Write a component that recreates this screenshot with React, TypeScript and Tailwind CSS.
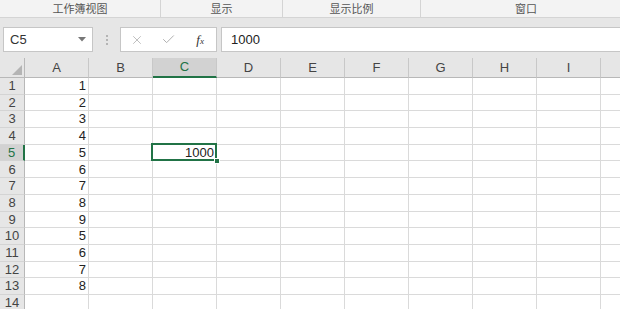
import { X, Check } from 'lucide-react';

const groups = [
  { label: '工作簿视图', w: 'w-[161px]' },
  { label: '显示', w: 'w-[122px]' },
  { label: '显示比例', w: 'w-[138px]' },
  { label: '窗口', w: 'w-[210px]' },
];

// J is only partly on screen, its letter falls off the edge
const cols = ['A', 'B', 'C', 'D', 'E', 'F', 'G', 'H', 'I', 'J'];
const colA = ['1', '2', '3', '4', '5', '6', '7', '8', '9', '5', '6', '7', '8', ''];

export default function App() {
  return (
    <div className="w-[620px] h-[309px] overflow-hidden bg-white font-['Liberation_Sans',sans-serif] text-[#222]">
      {/* ribbon group labels */}
      <div className="flex h-[18px] bg-[#f3f3f3] border-b border-[#d4d4d4]">
        {groups.map((g, i) => (
          <div
            key={g.label}
            className={`${g.w} shrink-0 flex justify-center items-start pt-[1px] ${i < groups.length - 1 ? 'border-r border-[#d4d4d4]' : ''}`}
          >
            <span className="text-[11px] leading-[14px] text-[#555] font-['Noto_Sans_CJK_SC',sans-serif]">{g.label}</span>
          </div>
        ))}
      </div>

      {/* formula bar */}
      <div className="flex items-start h-[40px] bg-[#e6e6e6] pt-[9px] pl-[3px]">
        <div className="w-[90px] h-[25px] bg-white border border-[#c6c6c6] flex items-center justify-between px-[6px]">
          <span className="text-[13px] text-[#333]">C5</span>
          <svg width="8" height="5" viewBox="0 0 8 5">
            <polygon points="0,0 8,0 4,4.5" fill="#777" />
          </svg>
        </div>
        <div className="w-[27px] h-[25px] flex flex-col items-center justify-center gap-[2px]">
          <span className="w-[2px] h-[2px] bg-[#b4b4b4]" />
          <span className="w-[2px] h-[2px] bg-[#b4b4b4]" />
          <span className="w-[2px] h-[2px] bg-[#b4b4b4]" />
        </div>
        <div className="w-[97px] h-[25px] bg-white border border-[#c6c6c6] flex items-center">
          <div className="w-[32px] flex justify-center">
            <X size={14} strokeWidth={1.4} className="text-[#b0b0b0]" />
          </div>
          <div className="w-[32px] flex justify-center">
            <Check size={15} strokeWidth={1.6} className="text-[#b0b0b0]" />
          </div>
          <div className="w-[32px] flex justify-center">
            <span className="italic font-['Liberation_Serif',serif] text-[13px] text-[#333] leading-none">
              f<span className="text-[9px]">x</span>
            </span>
          </div>
        </div>
        <div className="flex-1 h-[25px] ml-[4px] -mr-[2px] bg-white border border-[#c6c6c6] flex items-center pl-[9px]">
          <span className="text-[13px] text-[#222]">1000</span>
        </div>
      </div>

      {/* sheet */}
      <div className="grid grid-cols-[25px_repeat(10,64px)] grid-rows-[20px_repeat(14,16.7px)] bg-white">
        <div className="relative bg-[#e6e6e6] border-r border-b border-[#b8b8b8]">
          <svg className="absolute right-[2px] bottom-[2px]" width="10" height="10" viewBox="0 0 10 10">
            <polygon points="10,0 10,10 0,10" fill="#b4b4b4" />
          </svg>
        </div>
        {cols.map(c => (
          <div
            key={c}
            className={`flex items-center justify-center text-[13px] border-r border-r-[#c8c8c8] ${
              c === 'C'
                ? 'bg-[#d2d2d2] text-[#217346] border-b-2 border-b-[#217346]'
                : 'bg-[#e6e6e6] text-[#444] border-b border-b-[#b8b8b8]'
            }`}
          >
            {c !== 'J' && c}
          </div>
        ))}

        {colA.map((v, r) => (
          <div key={r} className="contents">
            <div
              className={`flex items-center justify-center text-[13px] border-b border-b-[#d4d4d4] ${
                r === 4
                  ? 'bg-[#d2d2d2] text-[#217346] border-r-2 border-r-[#217346]'
                  : 'bg-[#e6e6e6] text-[#444] border-r border-r-[#b8b8b8]'
              }`}
            >
              {r + 1}
            </div>
            {cols.map(c => (
              <div key={c} className="relative flex items-center justify-end pr-[2px] border-r border-b border-[#dadada] text-[13px] text-[#222]">
                {c === 'A' && v}
                {c === 'C' && r === 4 && (
                  <>
                    <span>1000</span>
                    <div className="absolute -left-[2px] -top-[2px] -right-[1px] -bottom-[1px] border-2 border-[#217346] z-10" />
                    <div className="absolute -right-[4px] -bottom-[4px] w-[6px] h-[6px] bg-[#217346] border border-white z-20" />
                  </>
                )}
              </div>
            ))}
          </div>
        ))}
      </div>
    </div>
  );
}
